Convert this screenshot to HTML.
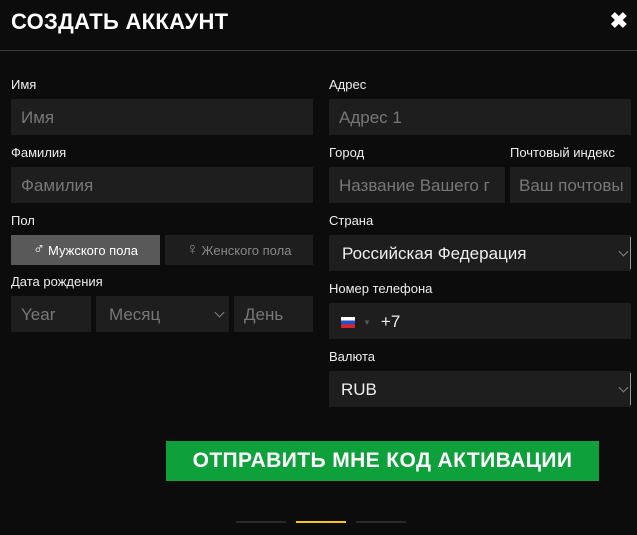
<!DOCTYPE html><html><head><meta charset="utf-8"><style>
*{box-sizing:border-box;margin:0;padding:0}
body{width:637px;height:535px;background:#0c0c0c;font-family:"Liberation Sans",sans-serif;position:relative;overflow:hidden;color:#fff}
.a{position:absolute}
.t{left:11px;top:9px;font-size:22px;font-weight:bold;letter-spacing:0.3px}
.x{right:9px;top:8px;font-size:22px;font-weight:bold}
.hr{left:0;top:50px;width:637px;height:1px;background:#3a3a3a}
.l{font-size:13px;color:#eee}
.i{background:#1e1e1e;color:#777;font-size:17px;padding-left:10px;padding-top:2px;display:flex;align-items:center;white-space:nowrap;overflow:hidden}
.w{color:#eee}
.ch{position:absolute;right:4px;top:50%;width:7px;height:7px;border-right:1.5px solid #888;border-bottom:1.5px solid #888;transform:translateY(-70%) rotate(45deg)}
</style></head><body>
<div class="a t">СОЗДАТЬ АККАУНТ</div>
<div class="a x">✖</div>
<div class="a hr"></div>

<div class="a l" style="left:11px;top:77px">Имя</div>
<div class="a i" style="left:11px;top:99px;width:302px;height:36px">Имя</div>
<div class="a l" style="left:11px;top:145px">Фамилия</div>
<div class="a i" style="left:11px;top:167px;width:302px;height:36px">Фамилия</div>
<div class="a l" style="left:11px;top:213px">Пол</div>
<div class="a i" style="left:11px;top:235px;width:149px;height:30px;background:#595959;color:#fff;font-size:13px;justify-content:center;padding:0"><span style="font-size:16px;margin-right:3px">♂</span>Мужского пола</div>
<div class="a i" style="left:165px;top:235px;width:148px;height:30px;color:#888;font-size:13px;justify-content:center;padding:0"><span style="font-size:16px;margin-right:3px">♀</span>Женского пола</div>
<div class="a l" style="left:11px;top:274px">Дата рождения</div>
<div class="a i" style="left:11px;top:296px;width:80px;height:36px">Year</div>
<div class="a i" style="left:96px;top:296px;width:133px;height:36px;padding-left:13px">Месяц<span class="ch" style="right:6px"></span></div>
<div class="a i" style="left:234px;top:296px;width:79px;height:36px">День</div>

<div class="a l" style="left:329px;top:77px">Адрес</div>
<div class="a i" style="left:329px;top:99px;width:302px;height:36px">Адрес 1</div>
<div class="a l" style="left:329px;top:145px">Город</div>
<div class="a l" style="left:510px;top:145px">Почтовый индекс</div>
<div class="a i" style="left:329px;top:167px;width:176px;height:36px">Название Вашего г</div>
<div class="a i" style="left:510px;top:167px;width:121px;height:36px;padding-left:9px">Ваш почтовы</div>
<div class="a l" style="left:329px;top:213px">Страна</div>
<div class="a i w" style="left:329px;top:235px;width:302px;height:36px;padding-left:13px">Российская Федерация<span class="ch"></span><span style="position:absolute;right:0;top:2px;width:1px;height:32px;background:#999"></span></div>
<div class="a l" style="left:329px;top:281px">Номер телефона</div>
<div class="a i w" style="left:329px;top:303px;width:302px;height:36px;padding-left:12px"><span style="display:inline-block;width:14px;height:11px;background:linear-gradient(#fff 33%,#2a4fc0 33% 66%,#d22 66%)"></span><span style="color:#555;font-size:8px;margin:0 10px 0 8px">▼</span>+7</div>
<div class="a l" style="left:329px;top:349px">Валюта</div>
<div class="a i w" style="left:329px;top:371px;width:302px;height:36px;padding-left:12px">RUB<span class="ch"></span><span style="position:absolute;right:0;top:2px;width:1px;height:32px;background:#999"></span></div>

<div class="a" style="left:166px;top:441px;width:433px;height:40px;background:#0ea03a;color:#fff;font-weight:bold;font-size:21px;letter-spacing:0.4px;display:flex;align-items:center;justify-content:center">ОТПРАВИТЬ МНЕ КОД АКТИВАЦИИ</div>
<div class="a" style="left:236px;top:521px;width:50px;height:2px;background:#2a2a2a"></div>
<div class="a" style="left:296px;top:521px;width:50px;height:2px;background:#f5c518"></div>
<div class="a" style="left:356px;top:521px;width:50px;height:2px;background:#2a2a2a"></div>
</body></html>
